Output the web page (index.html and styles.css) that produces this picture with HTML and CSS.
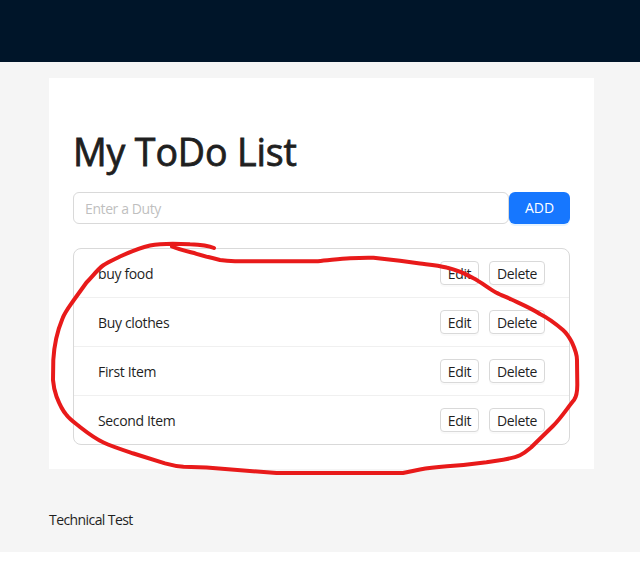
FILE: index.html
```html
<!DOCTYPE html>
<html lang="en">
<head>
<meta charset="utf-8">
<title>My ToDo List</title>
<link rel="stylesheet" href="styles.css">
</head>
<body>
<div class="layout">
  <header class="header"></header>
  <main class="card">
    <h1 class="title">My ToDo List</h1>
    <form class="entry">
      <input class="input" type="text" placeholder="Enter a Duty">
      <button class="add" type="button">ADD</button>
    </form>
    <ul class="list">
      <li class="item"><span class="name">buy food</span><button class="btn edit" type="button">Edit</button><button class="btn delete" type="button">Delete</button></li>
      <li class="item"><span class="name">Buy clothes</span><button class="btn edit" type="button">Edit</button><button class="btn delete" type="button">Delete</button></li>
      <li class="item"><span class="name">First Item</span><button class="btn edit" type="button">Edit</button><button class="btn delete" type="button">Delete</button></li>
      <li class="item"><span class="name">Second Item</span><button class="btn edit" type="button">Edit</button><button class="btn delete" type="button">Delete</button></li>
    </ul>
  </main>
  <footer class="footer">Technical Test</footer>
</div>
<svg class="marker" width="640" height="561" viewBox="0 0 640 561" aria-hidden="true">
  <path d="M214 248C207 245 198 244.600 190 244.300C172 243.200 160 243.500 150 245.500C140 247.500 130 252 120 256.500C114 259.500 108 262 103 265.500C98 269 92 277 86.500 282.500L73.500 300.500C69 307 65 312 62.500 318.500C56.500 333 54 347 53.300 360L53 380C53.500 386 54.500 391 56.500 396.500C59 403 62 410 66.500 415C70 419.500 75 423 80 427C87 432.500 95 438.500 103.500 442.500C112 446.500 123 450 133.500 453.500L165 463.300C171 465 177 466.200 183.500 466.700L206.500 467.500L276.500 473L403 473C409 472 414 470.500 420 469.500C428 468 438 467 447 466.300C460 465.500 474 464 486.500 462.300C497 460.500 511 459.500 520 455.300C525 453 528 450 531 447.500L553 426C562 417 568 407 574 400C577 396 577.300 390 577.300 385L577 360C577 353 574 347 571.500 341.500C569 337 566.500 333 563 330C556 324 547 317.500 540 314C531 308 520 303.500 511.500 299.500C506 297 501 295 496 292.500C488 288 481 282 473 278C465 273.500 455 269.500 446.500 267.500C437 265 428 264.500 420 263.500L400 260.700L373.500 257.700C365 257.500 357 257.800 350 258.200C339 258.800 328 260.500 318 261.200L235 261.200C229 261 225 260.700 220 260C212 258 204 256 196.500 253.800C188 251.500 179 249.500 172 246.500"/>
</svg>
</body>
</html>
```
FILE: styles.css
```css
* { box-sizing: border-box; }
body {
  margin: 0;
  height: 561px;
  overflow: hidden;
  background: #fff;
  color: #1f1f1f;
  font: 14px/22px "Open Sans", "Noto Sans", sans-serif;
  letter-spacing: -.35px;
}
.layout {
  height: 552px;
  background: #f5f5f5;
}
.header {
  height: 62px;
  background: #001529;
}
.card {
  width: 545px;
  height: 391px;
  margin: 16px 0 0 49px;
  padding: 51px 24px 24px;
  background: #fff;
}
.title {
  margin: 0 0 17px;
  font-size: 37.5px;
  line-height: 46px;
  font-weight: 400;
  letter-spacing: -.13px;
  -webkit-text-stroke: .8px #1f1f1f;
  white-space: nowrap;
}
.entry {
  display: flex;
  height: 32px;
  margin: 0 0 24px;
}
.input {
  width: 436px;
  padding: 5px 11px 4px;
  border: 1px solid #d9d9d9;
  border-radius: 6px;
  font: inherit;
  letter-spacing: -.4px;
}
.input::placeholder { color: #bfbfbf; opacity: 1; }
.add {
  width: 61px;
  padding: 0;
  border: 0;
  border-radius: 6px;
  background: #1677ff;
  box-shadow: 0 2px 0 rgba(5, 145, 255, .1);
  color: #fff;
  font: inherit;
  letter-spacing: 0;
}
.list {
  margin: 0;
  padding: 0;
  width: 497px;
  list-style: none;
  border: 1px solid #d9d9d9;
  border-radius: 8px;
}
.item {
  display: flex;
  align-items: center;
  height: 49px;
  padding: 0 24px;
  border-bottom: 1px solid #f0f0f0;
}
.item:last-child { height: 48px; border-bottom: 0; }
.name {
  flex: 1;
  padding-top: 2px;
}
.btn {
  height: 24px;
  padding: 1px 0 0;
  border: 1px solid #d9d9d9;
  border-radius: 4px;
  background: #fff;
  box-shadow: 0 2px 0 rgba(0, 0, 0, .02);
  color: #1f1f1f;
  font: inherit;
  line-height: 21px;
  letter-spacing: -.35px;
}
.edit { width: 39px; margin-right: 10px; }
.delete { width: 56px; }
.footer {
  padding: 40px 49px 0;
  letter-spacing: -.58px;
}
.marker {
  position: absolute;
  top: 0;
  left: 0;
  pointer-events: none;
}
.marker path {
  fill: none;
  stroke: #e81a1a;
  stroke-width: 4;
  stroke-linecap: round;
  stroke-linejoin: round;
}
```
